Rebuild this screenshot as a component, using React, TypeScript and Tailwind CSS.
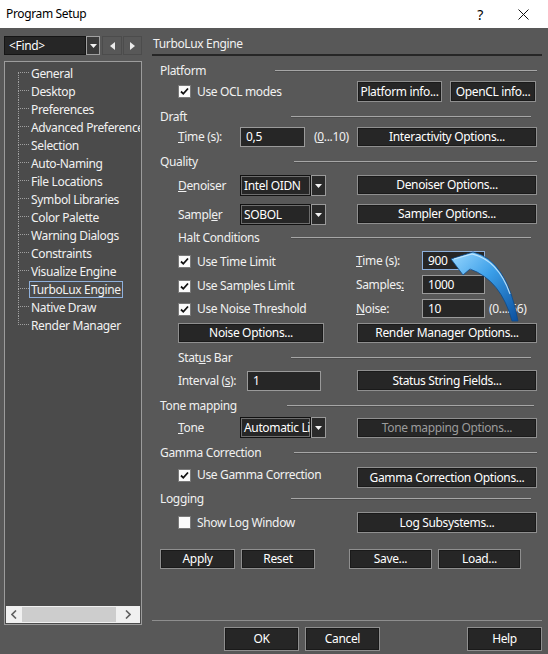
import React from 'react'

type Kids = { children?: React.ReactNode }

function Btn({ className = '', children, disabled }: Kids & { className?: string; disabled?: boolean }) {
  return (
    <div
      className={`flex items-center justify-center whitespace-nowrap border border-[#8f8f8f] bg-[#262626] shadow-[inset_0_0_0_1px_#1a1a1a] ${disabled ? 'text-[#9b9b9b]' : 'text-white'} ${className}`}
    >
      {children}
    </div>
  )
}

function Field({ value, className = '', focus }: { value: string; className?: string; focus?: boolean }) {
  return (
    <div
      className={`flex items-center pl-[5px] bg-[#262626] text-white border ${focus ? 'border-[#8db0dc]' : 'border-[#9a9a9a]'} ${className}`}
    >
      {value}
    </div>
  )
}

function Combo({ value }: { value: string }) {
  return (
    <div className="flex h-[21px] w-[86px]">
      <div className="flex-1 flex items-center pl-[3px] bg-[#262626] border border-[#111] shadow-[inset_0_0_0_1px_#6d6d6d] text-white whitespace-nowrap overflow-hidden">
        {value}
      </div>
      <div className="w-[15px] flex items-center justify-center bg-[#2a2a2a] border border-[#9a9a9a]">
        <svg width="7" height="4" viewBox="0 0 7 4">
          <path d="M0 0h7L3.5 4z" fill="#f2f2f2" />
        </svg>
      </div>
    </div>
  )
}

function Check({ checked, children }: Kids & { checked?: boolean }) {
  return (
    <div className="flex items-center">
      <div className="w-[13px] h-[13px] border border-[#7a7a7a] bg-[#fbfbfb] flex items-center justify-center">
        {checked && (
          <svg width="9" height="9" viewBox="0 0 9 9">
            <path d="M1 4.5l2.3 2.3L8 1.5" stroke="#111" strokeWidth="1.8" fill="none" />
          </svg>
        )}
      </div>
      <span className="ml-[6px] text-[#f2f2f2] whitespace-nowrap">{children}</span>
    </div>
  )
}

function Heading({ label, textW, lineW, className = '' }: { label: React.ReactNode; textW: string; lineW: string; className?: string }) {
  return (
    <div className={`flex items-center h-[16px] text-[#f0f0f0] ${className}`}>
      <span className={`whitespace-nowrap ${textW}`}>{label}</span>
      <div className={`h-[2px] border-t border-[#a6a6a6] border-b border-b-[#4c4c4c] ${lineW}`} />
    </div>
  )
}

const treeItems = [
  'General',
  'Desktop',
  'Preferences',
  'Advanced Preferences',
  'Selection',
  'Auto-Naming',
  'File Locations',
  'Symbol Libraries',
  'Color Palette',
  'Warning Dialogs',
  'Constraints',
  'Visualize Engine',
  'TurboLux Engine',
  'Native Draw',
  'Render Manager',
]

function Tree() {
  return (
    <div className="mt-[6px] h-[564px] border border-[#9c9c9c] p-[1px] flex flex-col bg-[#4b4b4b]">
      <div className="flex-1 pt-[1px] overflow-hidden">
        {treeItems.map((name, i) => (
          <div key={name} className="flex h-[18px] items-stretch whitespace-nowrap">
            {/* connector */}
            <div className="ml-[12px] w-[11px] shrink-0 flex flex-col">
              <div className={`h-[9px] border-b border-dotted border-b-[#a0a0a0] ${i > 0 ? 'border-l border-dotted border-l-[#a0a0a0]' : ''}`} />
              <div className={`flex-1 ${i < treeItems.length - 1 ? 'border-l border-dotted border-l-[#a0a0a0]' : ''}`} />
            </div>
            <div className="flex items-center shrink-0">
              <span
                className={`leading-[15px] px-[1px] text-[#f2f2f2] border ${name === 'TurboLux Engine' ? 'border-[#8fb0dc]' : 'border-transparent'}`}
              >
                {name}
              </span>
            </div>
          </div>
        ))}
      </div>
      <div className="h-[17px] bg-[#f0f0f0] flex items-center">
        <div className="w-[16px] flex items-center justify-center">
          <svg width="6" height="9" viewBox="0 0 6 9">
            <path d="M5 0.5L1 4.5l4 4" stroke="#606060" strokeWidth="1.6" fill="none" />
          </svg>
        </div>
        <div className="w-[94px] h-[15px] bg-[#cdcdcd]" />
        <div className="flex-1 flex items-center justify-center">
          <svg width="6" height="9" viewBox="0 0 6 9">
            <path d="M1 0.5l4 4-4 4" stroke="#606060" strokeWidth="1.6" fill="none" />
          </svg>
        </div>
      </div>
    </div>
  )
}

export default function App() {
  return (
    <div className="w-[548px] h-[654px] flex flex-col overflow-hidden text-[12px] tracking-[-0.35px] font-['Noto_Sans','Open_Sans',sans-serif]">
      {/* title bar */}
      <div className="h-[28px] shrink-0 bg-white flex items-center text-black">
        <span className="ml-[6px]">Program Setup</span>
        <span className="ml-auto mr-[35px] text-[14px]">?</span>
        <svg className="mr-[19px]" width="11" height="11" viewBox="0 0 11 11">
          <path d="M0.5 0.5l10 10M10.5 0.5l-10 10" stroke="#111" strokeWidth="1" />
        </svg>
      </div>

      <div className="relative flex-1 flex bg-[#585858] pl-[4px]">
        {/* left column */}
        <div className="w-[138px] flex flex-col">
          <div className="mt-[8px] h-[19px] flex">
            <div className="w-[82px] flex items-center pl-[4px] bg-[#262626] border border-[#151515] text-white">
              &lt;Find&gt;
            </div>
            <div className="w-[14px] flex items-center justify-center bg-[#3a3a3a] border border-[#a0a0a0]">
              <svg width="7" height="4" viewBox="0 0 7 4">
                <path d="M0 0h7L3.5 4z" fill="#f2f2f2" />
              </svg>
            </div>
            <div className="ml-[2px] w-[20px] flex items-center justify-center border border-[#4c4c4c]">
              <svg width="5" height="8" viewBox="0 0 5 8">
                <path d="M5 0v8L0 4z" fill="#ececec" />
              </svg>
            </div>
            <div className="ml-[1px] w-[19px] flex items-center justify-center border border-[#4c4c4c]">
              <svg width="5" height="8" viewBox="0 0 5 8">
                <path d="M0 0v8l5-4z" fill="#ececec" />
              </svg>
            </div>
          </div>
          <Tree />
        </div>

        {/* right column */}
        <div className="ml-[10px] flex-1 flex flex-col text-[#f0f0f0]">
          <div className="mt-[8px] h-[20px] w-[390px] flex items-center border-b-2 border-[#262626] pl-[1px] pb-[2px] text-[#f2f2f2]">
            TurboLux Engine
          </div>

          <div className="pl-[8px] flex flex-col">
            <Heading className="mt-[7px]" label="Platform" textW="w-[115px]" lineW="w-[262px]" />
            <div className="mt-[2px] h-[21px] flex items-center">
              <div className="w-[197px] pl-[18px]">
                <Check checked>Use OCL modes</Check>
              </div>
              <Btn className="w-[85px] h-[21px]">Platform info...</Btn>
              <Btn className="ml-[8px] w-[86px] h-[21px]">OpenCL info...</Btn>
            </div>

            <Heading className="mt-[7px]" label="Draft" textW="w-[131px]" lineW="w-[240px]" />
            <div className="mt-[2px] h-[20px] flex items-center">
              <div className="w-[197px] pl-[18px] flex items-center">
                <span className="w-[62px]">
                  <span className="underline">T</span>ime (s):
                </span>
                <Field className="w-[65px] h-[20px]" value="0,5" />
                <span className="ml-[9px]">
                  (<span className="underline">0</span>...10)
                </span>
              </div>
              <Btn className="w-[180px] h-[20px]">Interactivity Options...</Btn>
            </div>

            <Heading className="mt-[7px]" label="Quality" textW="w-[134px]" lineW="w-[243px]" />
            <div className="mt-[5px] h-[21px] flex items-start">
              <div className="w-[197px] pl-[18px] flex items-center h-[21px]">
                <span className="w-[62px]">
                  <span className="underline">D</span>enoiser
                </span>
                <Combo value="Intel OIDN" />
              </div>
              <Btn className="w-[180px] h-[20px]">Denoiser Options...</Btn>
            </div>
            <div className="mt-[8px] h-[21px] flex items-start">
              <div className="w-[197px] pl-[18px] flex items-center h-[21px]">
                <span className="w-[62px]">
                  Sampl<span className="underline">e</span>r
                </span>
                <Combo value="SOBOL" />
              </div>
              <Btn className="w-[180px] h-[20px]">Sampler Options...</Btn>
            </div>

            <Heading className="mt-[5px] pl-[18px]" label="Halt Conditions" textW="w-[113px]" lineW="w-[240px]" />
            <div className="mt-[5px] h-[19px] flex items-center">
              <div className="w-[196px] pl-[18px] pt-[2px]">
                <Check checked>Use Time Limit</Check>
              </div>
              <span className="w-[66px]">
                <span className="underline">T</span>ime (s):
              </span>
              <Field className="w-[63px] h-[19px]" value="900" focus />
            </div>
            <div className="mt-[5px] h-[19px] flex items-center">
              <div className="w-[196px] pl-[18px] pt-[3px]">
                <Check checked>Use Samples Limit</Check>
              </div>
              <span className="w-[66px]">
                Samples<span className="underline">:</span>
              </span>
              <Field className="w-[63px] h-[19px]" value="1000" />
            </div>
            <div className="mt-[5px] h-[19px] flex items-center">
              <div className="w-[196px] pl-[18px] pt-[1px]">
                <Check checked>Use Noise Threshold</Check>
              </div>
              <span className="w-[66px]">
                <span className="underline">N</span>oise:
              </span>
              <Field className="w-[63px] h-[19px]" value="10" />
              <span className="ml-[4px]">(0....56)</span>
            </div>
            <div className="mt-[5px] h-[20px] flex items-center">
              <div className="w-[197px] pl-[18px]">
                <Btn className="w-[146px] h-[20px]">Noise Options...</Btn>
              </div>
              <Btn className="w-[180px] h-[20px]">Render Manager Options...</Btn>
            </div>

            <Heading
              className="mt-[7px] pl-[18px]"
              label={
                <>
                  Stat<span className="underline">u</span>s Bar
                </>
              }
              textW="w-[113px]"
              lineW="w-[240px]"
            />
            <div className="mt-[4px] h-[21px] flex items-center">
              <div className="w-[197px] pl-[18px] flex items-center">
                <span className="w-[69px]">
                  Interval (<span className="underline">s</span>):
                </span>
                <Field className="w-[74px] h-[20px] mt-[1px]" value="1" />
              </div>
              <Btn className="w-[180px] h-[21px]">Status String Fields...</Btn>
            </div>

            <Heading className="mt-[7px]" label="Tone mapping" textW="w-[127px]" lineW="w-[247px]" />
            <div className="mt-[3px] h-[21px] flex items-start">
              <div className="w-[197px] pl-[18px] flex items-center h-[21px]">
                <span className="w-[62px]">
                  <span className="underline">T</span>one
                </span>
                <Combo value="Automatic Linear" />
              </div>
              <Btn className="w-[180px] h-[20px] mt-[1px]" disabled>
                Tone mapping Options...
              </Btn>
            </div>

            <Heading className="mt-[7px]" label="Gamma Correction" textW="w-[134px]" lineW="w-[243px]" />
            <div className="mt-[6px] h-[21px] flex items-start">
              <div className="w-[197px] pl-[18px] h-[16px] flex items-center">
                <Check checked>Use Gamma Correction</Check>
              </div>
              <Btn className="w-[180px] h-[21px]">Gamma Correction Options...</Btn>
            </div>

            <Heading className="mt-[3px]" label="Logging" textW="w-[131px]" lineW="w-[240px]" />
            <div className="mt-[5px] h-[21px] flex items-center">
              <div className="w-[197px] pl-[18px]">
                <Check>Show Log Window</Check>
              </div>
              <Btn className="w-[180px] h-[21px]">Log Subsystems...</Btn>
            </div>

            <div className="mt-[16px] h-[20px] flex items-center">
              <Btn className="w-[75px] h-[20px]">Apply</Btn>
              <Btn className="ml-[6px] w-[74px] h-[20px]">Reset</Btn>
              <Btn className="ml-[34px] w-[83px] h-[20px]">Save...</Btn>
              <Btn className="ml-[6px] w-[83px] h-[20px]">Load...</Btn>
            </div>
          </div>

          <div className="mt-[51px] w-[390px] h-[1px] bg-[#8e8e8e]" />
          <div className="mt-[6px] h-[24px] w-[390px] flex items-center">
            <Btn className="ml-[72px] w-[75px] h-[24px]">OK</Btn>
            <Btn className="ml-[6px] w-[75px] h-[24px]">Cancel</Btn>
            <Btn className="ml-auto w-[75px] h-[24px]">Help</Btn>
          </div>
        </div>

        {/* pointer arrow over the Time field */}
        <svg
          className="absolute left-[445px] top-[220px] pointer-events-none"
          width="82"
          height="76"
          viewBox="0 0 82 76"
        >
          <defs>
            <linearGradient id="arrowFill" x1="0" y1="0" x2="1" y2="1">
              <stop offset="0" stopColor="#9ad8ff" />
              <stop offset="0.45" stopColor="#3a9ee8" />
              <stop offset="1" stopColor="#0b4f9e" />
            </linearGradient>
          </defs>
          <path
            d="M6 11 L28 4 Q62 12 73 73 L67 73 Q56 32 25 21 L18 27 Z"
            fill="url(#arrowFill)"
            stroke="#0d4a8a"
            strokeWidth="0.8"
          />
          <path d="M9 11 L27 6 Q53 12 65 46" stroke="#d4efff" strokeWidth="1.2" fill="none" opacity="0.8" />
        </svg>
      </div>
    </div>
  )
}
